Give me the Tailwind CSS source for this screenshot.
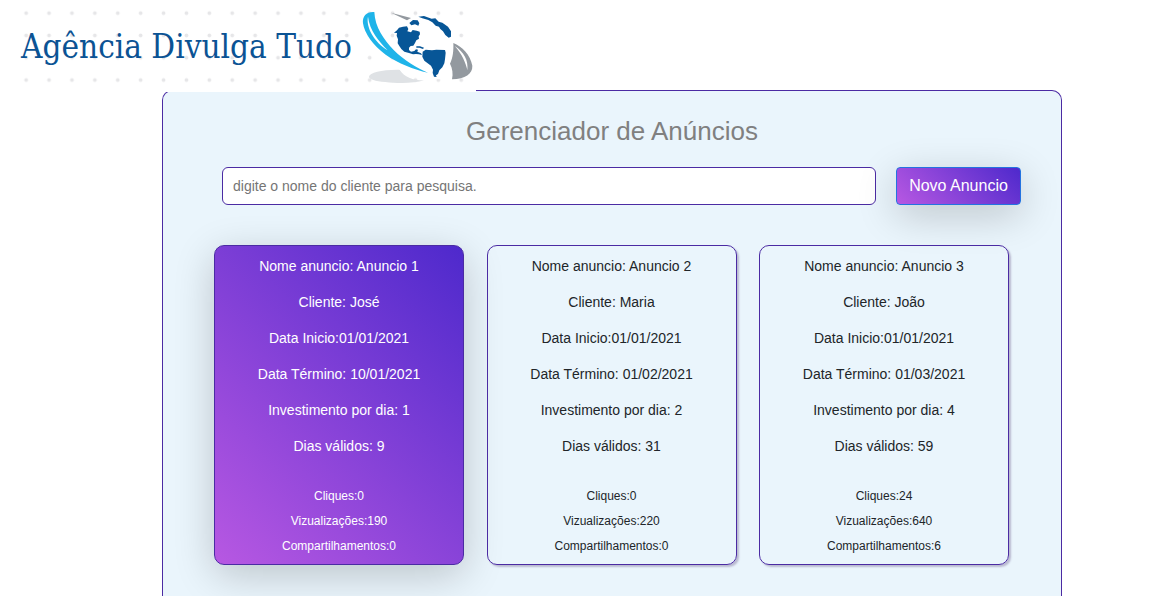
<!DOCTYPE html>
<html lang="pt-BR">
<head>
<meta charset="utf-8">
<meta name="viewport" content="width=device-width, initial-scale=1">
<title>Agência Divulga Tudo</title>
<script src="https://cdn.jsdelivr.net/npm/@tailwindcss/browser@4"></script>
</head>
<body class="min-h-screen flex flex-col bg-white font-['Liberation_Sans',Arial,sans-serif] text-[#212529] overflow-x-hidden">
<header class="relative z-10 w-[476px] max-w-full h-[92px] bg-white">
  <svg class="w-full h-full" viewBox="0 0 476 92" role="img" aria-label="Agência Divulga Tudo">
    <defs>
      <pattern id="dots" x="14.7" y="2" width="22.9" height="22.3" patternUnits="userSpaceOnUse">
        <circle cx="11.45" cy="11.15" r="1.9" fill="#e6e6e8"/>
      </pattern>
    </defs>
    <rect x="14.7" y="2" width="458" height="89" fill="url(#dots)"/>
    <text x="21" y="58" font-family="'DejaVu Serif Condensed','DejaVu Serif',serif" font-size="33" fill="#0b5394">Agência Divulga Tudo</text>
    <g transform="translate(355 0) scale(.33333)">
      <path d="M42 230C44 217 82 208 134 209C147 231 173 241 207 241C176 251 126 250 91 246C60 243 42 238 42 230Z" fill="#dfe2e5"/>
      <path d="M133 209C175 231 225 239 280 238L294 130C295 80 240 47 190 48C150 48 121 78 118 110Z" fill="#fff"/>
      <path d="M58 36C36 34 21 48 24 70C28 100 54 136 92 164C130 190 176 208 219 218C184 203 146 180 116 150C86 118 60 82 58 36Z" fill="#1fb4e9"/>
      <path d="M39 50C32 82 58 126 98 151C72 124 44 92 39 50Z" fill="#fff"/>
      <path d="M108 38L168 54L156 61Z" fill="#93999f"/>
      <path d="M295 129C321 139 346 164 352 197C353 222 331 236 291 238C295 221 292 205 285 191C294 174 296 151 295 129Z" fill="#93999f"/>
      <path d="M299 138C327 156 341 181 337 211C333 190 321 162 299 138Z" fill="#fff"/>
      <g fill="#075697">
        <path d="M117 98L126 91L132 83L144 80L156 79L160 87L157 94L168 97L173 90L185 92L194 95L195 103L191 109L192 116L184 121L180 129L175 137L167 138L162 143L162 150L168 155L178 153L183 148L189 149L187 155L198 160L201 165L192 163L183 162L174 163L162 159L148 155L139 147L133 138L128 130L129 118L125 107L126 99Z"/>
        <path d="M163 69L174 60L188 61L193 70L190 77L180 73L169 76Z"/>
        <path d="M190 50L207 48L230 56L241 55L251 65L262 68L279 80L288 94L288 110L281 113L271 105L264 94L256 87L252 80L242 77L232 67L220 60L202 55Z"/>
        <path d="M203 155L212 149L231 151L244 149L270 150L272 158L270 178L268 190L262 202L253 211L249 222L243 226L245 231L237 230L233 219L234 209L228 197L218 190L208 182L202 170Z"/>
        <path d="M184 139L195 139L207 143L204 147L193 143L184 143Z"/>
      </g>
    </g>
  </svg>
</header>
<main class="flex-1 flex flex-col pl-[162px] pr-[98px] -mt-0.5">
  <section class="flex-1 rounded-t-[10px] border border-b-0 border-[#4b2ba3] bg-[#eaf5fc] px-[51px] pb-[30px]">
    <h1 class="pt-5 text-center text-[26px] leading-10 text-[#808080]">Gerenciador de Anúncios</h1>
    <form class="mt-4 ml-2 -mr-3 flex gap-5 pr-[1px]">
      <input type="search" aria-label="Pesquisar cliente" placeholder="digite o nome do cliente para pesquisa." class="min-w-0 flex-1 h-[38px] rounded-md border border-[#4b2ba3] bg-white px-2.5 text-[14px] placeholder:text-[#757575]">
      <button type="button" class="w-[125px] h-[38px] rounded border border-[#2473e0] bg-[linear-gradient(45deg,#b758e2,#4e29cc)] text-base text-white shadow-[0_10px_40px_rgba(0,0,0,0.2)]">Novo Anuncio</button>
    </form>
    <div class="mt-10 mr-px flex justify-between">
      <article class="w-[250px] h-[320px] rounded-[10px] border border-[#4b2ba3] bg-[linear-gradient(45deg,#b758e2,#4e29cc)] pt-2.5 text-center text-white shadow-[0_10px_40px_rgba(0,0,0,0.2)]">
        <div class="flex flex-col gap-4 text-[14px] leading-5"><p>Nome anuncio: Anuncio 1</p><p>Cliente: José</p><p>Data Inicio:01/01/2021</p><p>Data Término: 10/01/2021</p><p>Investimento por dia: 1</p><p>Dias válidos: 9</p></div>
        <div class="mt-7 text-[12px] leading-[25px]"><p>Cliques:0</p><p>Vizualizações:190</p><p>Compartilhamentos:0</p></div>
      </article>
      <article class="w-[250px] h-[320px] rounded-[10px] border border-[#4b2ba3] pt-2.5 text-center shadow-[2px_2px_2px_#b9b9d0]">
        <div class="flex flex-col gap-4 text-[14px] leading-5"><p>Nome anuncio: Anuncio 2</p><p>Cliente: Maria</p><p>Data Inicio:01/01/2021</p><p>Data Término: 01/02/2021</p><p>Investimento por dia: 2</p><p>Dias válidos: 31</p></div>
        <div class="mt-7 text-[12px] leading-[25px]"><p>Cliques:0</p><p>Vizualizações:220</p><p>Compartilhamentos:0</p></div>
      </article>
      <article class="w-[250px] h-[320px] rounded-[10px] border border-[#4b2ba3] pt-2.5 text-center shadow-[2px_2px_2px_#b9b9d0]">
        <div class="flex flex-col gap-4 text-[14px] leading-5"><p>Nome anuncio: Anuncio 3</p><p>Cliente: João</p><p>Data Inicio:01/01/2021</p><p>Data Término: 01/03/2021</p><p>Investimento por dia: 4</p><p>Dias válidos: 59</p></div>
        <div class="mt-7 text-[12px] leading-[25px]"><p>Cliques:24</p><p>Vizualizações:640</p><p>Compartilhamentos:6</p></div>
      </article>
    </div>
  </section>
</main>
</body>
</html>
